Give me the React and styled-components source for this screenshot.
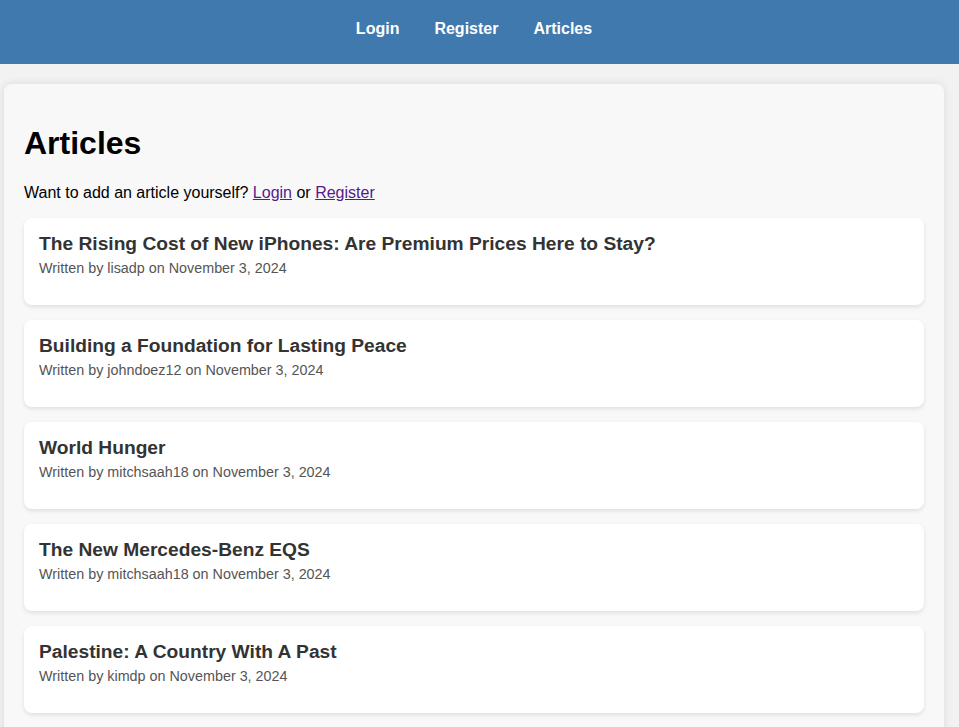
import React from "react";
import styled, { createGlobalStyle } from "styled-components";

const Global = createGlobalStyle`
  html, body { margin: 0; padding: 0; }
  body {
    background: #f2f2f2;
    font-family: "Liberation Sans", Arial, sans-serif;
    color: #000;
  }
`;

const Header = styled.header`
  height: 64px;
  background: #3f79ae;
  display: flex;
  align-items: center;
  justify-content: center;
  padding-right: 11px;
  padding-bottom: 7px;
  box-sizing: border-box;
`;

const Nav = styled.nav`
  display: flex;
  gap: 35px;
`;

const NavLink = styled.a`
  color: #fff;
  font-weight: bold;
  font-size: 16px;
  text-decoration: none;
`;

const Container = styled.main`
  width: 940px;
  margin: 20px 0 0 4px;
  padding: 20px;
  box-sizing: border-box;
  background: #f8f8f8;
  border-radius: 8px;
  box-shadow: 0 0 10px rgba(0, 0, 0, 0.1);
`;

const Title = styled.h1`
  font-size: 32px;
  margin: 21.44px 0;
  font-weight: bold;
`;

const Intro = styled.p`
  font-size: 16px;
  margin: 0 0 16px;
`;

const TextLink = styled.a`
  color: #551a8b;
  text-decoration: underline;
`;

const Card = styled.article`
  background: #fff;
  border-radius: 8px;
  padding: 15px;
  margin-bottom: 15px;
  box-shadow: 0 2px 4px rgba(0, 0, 0, 0.1);
`;

const CardTitle = styled.h2`
  font-size: 19.2px;
  margin: 0 0 5px;
  color: #333;
  font-weight: bold;
`;

const Meta = styled.p`
  font-size: 14.35px;
  margin: 0 0 14px;
  color: #555;
`;

const articles = [
  { title: "The Rising Cost of New iPhones: Are Premium Prices Here to Stay?", author: "lisadp" },
  { title: "Building a Foundation for Lasting Peace", author: "johndoez12" },
  { title: "World Hunger", author: "mitchsaah18" },
  { title: "The New Mercedes-Benz EQS", author: "mitchsaah18" },
  { title: "Palestine: A Country With A Past", author: "kimdp" },
];

export default function App() {
  return (
    <>
      <Global />
      <Header>
        <Nav>
          <NavLink href="#">Login</NavLink>
          <NavLink href="#">Register</NavLink>
          <NavLink href="#">Articles</NavLink>
        </Nav>
      </Header>
      <Container>
        <Title>Articles</Title>
        <Intro>
          Want to add an article yourself? <TextLink href="#">Login</TextLink> or{" "}
          <TextLink href="#">Register</TextLink>
        </Intro>
        {articles.map((a, i) => (
          <Card key={i}>
            <CardTitle>{a.title}</CardTitle>
            <Meta>Written by {a.author} on November 3, 2024</Meta>
          </Card>
        ))}
      </Container>
    </>
  );
}
